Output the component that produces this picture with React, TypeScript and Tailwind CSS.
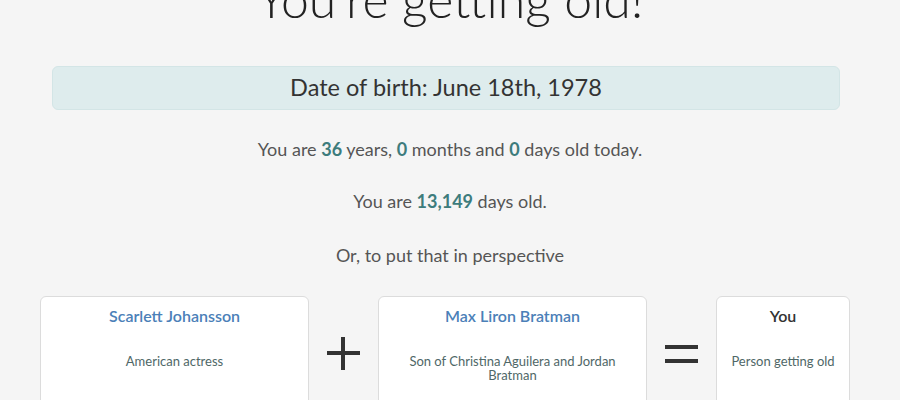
import React from "react";

const people = [
  { name: "Scarlett Johansson", desc: "American actress", w: "w-[269px]", title: "text-[#4b80b8]" },
  { name: "Max Liron Bratman", desc: "Son of Christina Aguilera and Jordan Bratman", w: "w-[269px]", title: "text-[#4b80b8]" },
  { name: "You", desc: "Person getting old", w: "w-[134px]", title: "text-[#333]" },
];

function Plus() {
  return (
    <svg width="69" height="40" viewBox="0 0 69 40" className="shrink-0 mt-[37px]">
      <rect x="18" y="18" width="33" height="4" fill="#333" />
      <rect x="32" y="4" width="4" height="33" fill="#333" />
    </svg>
  );
}

function Equals() {
  return (
    <svg width="69" height="40" viewBox="0 0 69 40" className="shrink-0 mt-[37px]">
      <rect x="18" y="12" width="33" height="4" fill="#333" />
      <rect x="18" y="26" width="33" height="4" fill="#333" />
    </svg>
  );
}

function Card({ p }: { p: (typeof people)[number] }) {
  return (
    <div className={`${p.w} h-[130px] shrink-0 bg-white border border-[#dcdcdc] rounded-md px-2 pt-[7px] text-center`}>
      <div className={`text-[16px] font-semibold ${p.title}`}>{p.name}</div>
      <div className="mx-auto max-w-[215px] mt-[26px] text-[13px] leading-[14px] text-[#4f6767]">{p.desc}</div>
    </div>
  );
}

export default function App() {
  return (
    <div className="w-[900px] h-[400px] overflow-hidden bg-[#f5f5f5] font-['Lato',sans-serif] text-[#555]">
      <h1 className="mt-[-29px] text-center text-[50px] leading-[56px] font-light text-[#222]">
        You're getting old!
      </h1>

      <div className="ml-[52px] mr-[60px] mt-[39px] h-[44px] rounded-md bg-[#deeced] border border-[#d3e5e6] flex items-center justify-center">
        <span className="text-[23.5px] text-[#333]">Date of birth: June 18th, 1978</span>
      </div>

      <div className="mt-[26px] text-center text-[18px] leading-[26px]">
        You are <b className="text-[#3d7c7c] font-bold">36</b> years, <b className="text-[#3d7c7c] font-bold">0</b> months and{" "}
        <b className="text-[#3d7c7c] font-bold">0</b> days old today.
      </div>
      <div className="mt-[26px] text-center text-[18px] leading-[26px]">
        You are <b className="text-[#3d7c7c] font-bold">13,149</b> days old.
      </div>
      <div className="mt-[28px] text-center text-[18px] leading-[26px]">Or, to put that in perspective</div>

      <div className="mt-[28px] ml-[40px] flex items-start">
        <Card p={people[0]} />
        <Plus />
        <Card p={people[1]} />
        <Equals />
        <Card p={people[2]} />
      </div>
    </div>
  );
}
